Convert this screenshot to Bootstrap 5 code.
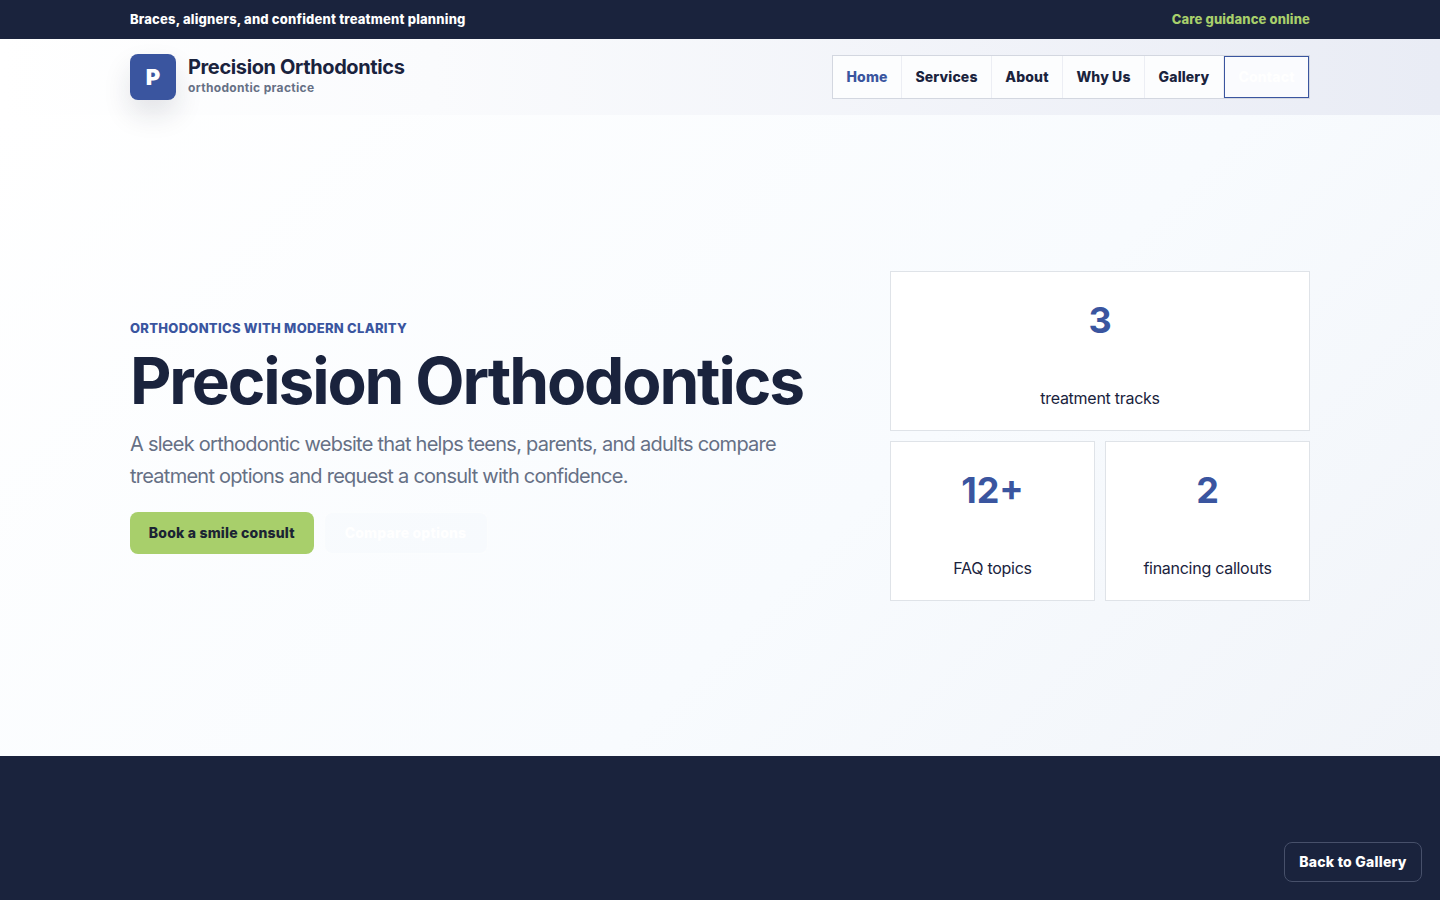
<!DOCTYPE html>
<html lang="en">
<head>
<meta charset="utf-8">
<meta name="viewport" content="width=device-width, initial-scale=1">
<title>Precision Orthodontics</title>
<link href="https://cdn.jsdelivr.net/npm/bootstrap@5.3.0/dist/css/bootstrap.min.css" rel="stylesheet">
<style>
:root{--navy:#1a233d;--blue:#3a559f;--green:#a8cf6b;--muted-ink:#667085}
body{font-family:Inter,"Liberation Sans",sans-serif;color:var(--navy);background:#fff;height:900px;overflow:hidden}
a{text-decoration:none}
.page-wrap{width:1180px;margin:0 auto}
.topline{height:39px;background:var(--navy);color:#fff;font-size:13px;font-weight:800;letter-spacing:.195px}
.topline .online{color:var(--green);letter-spacing:.13px}
.site-header{height:76px;background:linear-gradient(90deg,#fff 0%,#fafbfd 30%,#e9ecf5 100%);position:relative}
.brand-mark{width:46px;height:46px;border-radius:8px;background:var(--blue);color:#fff;font-size:22px;line-height:1;font-weight:900;box-shadow:0 14px 28px rgba(26,35,61,.12)}
.brand-text{padding-bottom:3px}
.brand-name{font-size:20px;font-weight:700;line-height:24px;color:var(--navy);letter-spacing:-.38px}
.brand-sub{font-size:12px;font-weight:700;line-height:17px;color:var(--muted-ink);letter-spacing:.33px}
.site-nav{border:1px solid #d3d7e0;background:#fcfdfe;height:44px}
.site-nav .nav-link{padding:0 0 2px;height:42px;color:var(--navy);font-size:14px;font-weight:800;letter-spacing:.13px;border-right:1px solid #eceef4;display:flex;align-items:center;justify-content:center}
.site-nav .nav-link.active{color:var(--blue)}
.site-nav .nav-link.contact{border:1px solid var(--blue);background:#fafbfe;color:#fff}
.nav-home{width:69px}
.nav-services{width:90px}
.nav-about{width:71px}
.nav-why{width:82px}
.nav-gallery{width:79px}
.contact{width:85px}
.hero{height:641px;background:linear-gradient(135deg,#fff 0%,#f8fbfe 60%,#f1f4f9 100%)}
.hero-copy{width:700px}
.eyebrow{font-size:13px;font-weight:800;line-height:20px;color:var(--blue);letter-spacing:.28px}
.hero-title{font-size:64px;font-weight:700;line-height:64px;white-space:nowrap;margin:11px 0 15px;letter-spacing:-2.12px}
.hero-text{font-size:20px;line-height:32px;color:var(--muted-ink);white-space:nowrap;letter-spacing:-.745px;margin-bottom:20px}
.btn-hero{height:42px;border-radius:8px;font-size:14px;font-weight:800;letter-spacing:.19px;padding:0 0 1px;display:flex;align-items:center;justify-content:center}
.btn-book{width:183.5px;background:var(--green);color:#1b2433}
.btn-compare{width:164px;margin-left:10px;color:#fff;background:rgba(236,240,250,.15);border:1px solid rgba(255,255,255,.5)}
.stats{width:420px;display:grid;grid-template-columns:1fr 1fr;gap:10px}
.stat{height:160px;background:#fff;border:1px solid #dfe3e8;text-align:center}
.stat.wide{grid-column:span 2}
.stat-num{font-size:36px;font-weight:700;line-height:44px;color:var(--blue);margin-top:26px}
.stat-label{font-size:16px;line-height:24px;margin-top:44px;letter-spacing:-.27px}
.dark-band{height:144px;background:var(--navy)}
.back-btn{right:18px;bottom:18px;width:138px;height:40px;border:1px solid #47506a;border-radius:8px;background:var(--navy);color:#fff;font-size:14px;font-weight:800;letter-spacing:.23px;padding-bottom:1px}
</style>
</head>
<body>
<div class="topline">
  <div class="page-wrap h-100 d-flex align-items-center justify-content-between">
    <span>Braces, aligners, and confident treatment planning</span>
    <span class="online">Care guidance online</span>
  </div>
</div>
<header class="site-header">
  <div class="page-wrap h-100 d-flex align-items-center justify-content-between">
    <a class="d-flex align-items-center" href="#">
      <span class="brand-mark d-flex align-items-center justify-content-center me-2">P</span>
      <span class="brand-text d-flex flex-column ps-1"><span class="brand-name">Precision Orthodontics</span><span class="brand-sub">orthodontic practice</span></span>
    </a>
    <nav class="site-nav nav flex-nowrap">
      <a class="nav-link nav-home active" href="#">Home</a>
      <a class="nav-link nav-services" href="#">Services</a>
      <a class="nav-link nav-about" href="#">About</a>
      <a class="nav-link nav-why" href="#">Why Us</a>
      <a class="nav-link nav-gallery" href="#">Gallery</a>
      <a class="nav-link contact" href="#">Contact</a>
    </nav>
  </div>
</header>
<main class="hero">
  <div class="page-wrap h-100 d-flex align-items-center justify-content-between">
    <section class="hero-copy">
      <div class="eyebrow">ORTHODONTICS WITH MODERN CLARITY</div>
      <h1 class="hero-title">Precision Orthodontics</h1>
      <p class="hero-text">A sleek orthodontic website that helps teens, parents, and adults compare<br>treatment options and request a consult with confidence.</p>
      <div class="d-flex">
        <a class="btn btn-hero btn-book" href="#">Book a smile consult</a>
        <a class="btn btn-hero btn-compare" href="#">Compare options</a>
      </div>
    </section>
    <section class="stats">
      <div class="stat wide"><div class="stat-num">3</div><div class="stat-label">treatment tracks</div></div>
      <div class="stat"><div class="stat-num">12+</div><div class="stat-label">FAQ topics</div></div>
      <div class="stat"><div class="stat-num">2</div><div class="stat-label">financing callouts</div></div>
    </section>
  </div>
</main>
<div class="dark-band"></div>
<a class="back-btn position-fixed d-flex align-items-center justify-content-center" href="#">Back to Gallery</a>
<script src="https://cdn.jsdelivr.net/npm/bootstrap@5.3.0/dist/js/bootstrap.bundle.min.js"></script>
</body>
</html>
